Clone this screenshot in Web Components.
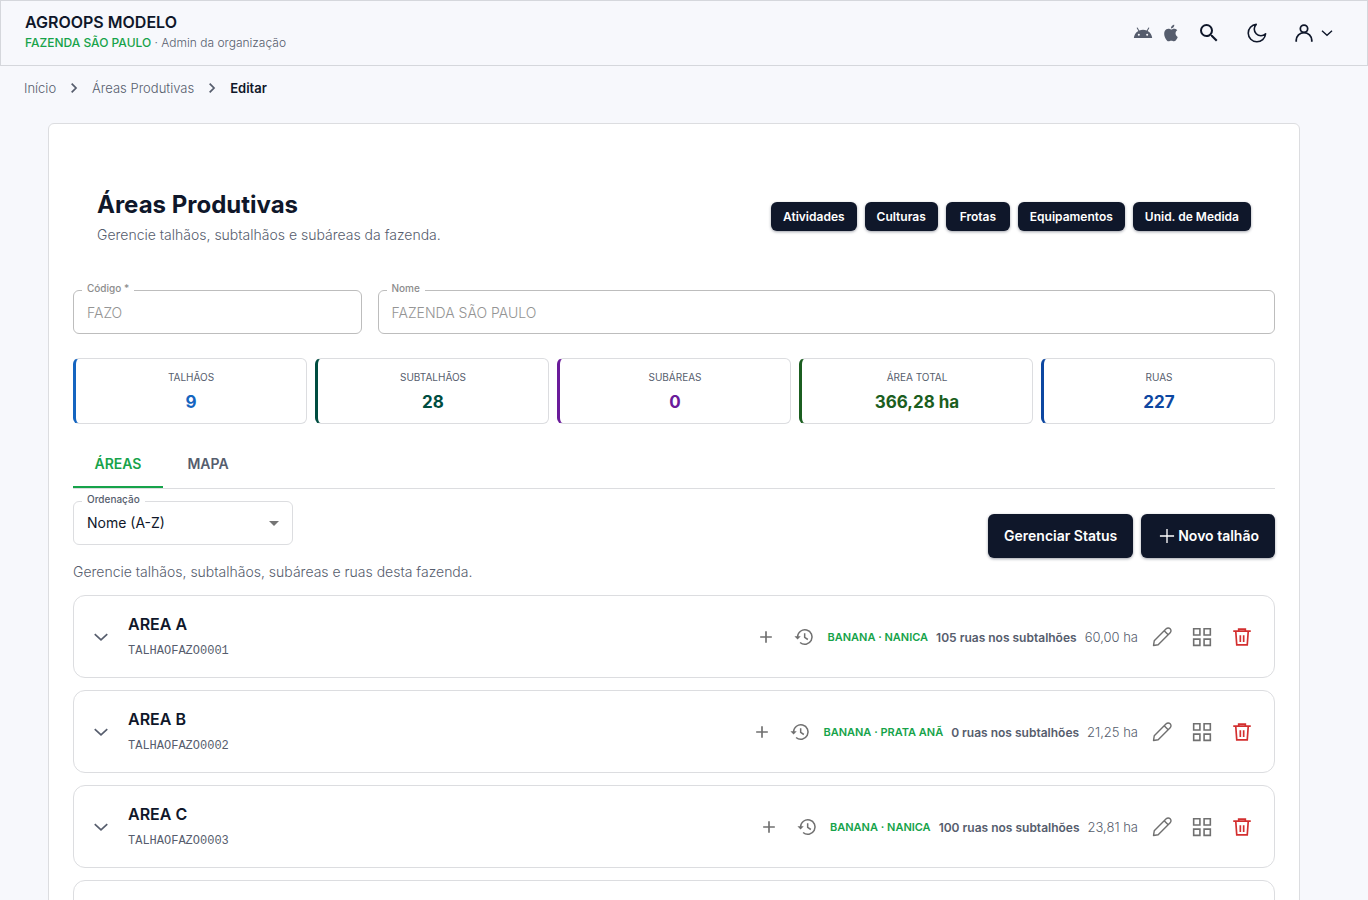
<!DOCTYPE html>
<html lang="pt-BR">
<head>
<meta charset="utf-8">
<meta name="viewport" content="width=device-width, initial-scale=1">
<title>AgroOps - Áreas Produtivas</title>
<style>
    :root {
        --ink: #0f172a;
        --muted: #565d6d;
        --green: #16a34a;
        --line: #dcdde0;
        --icon: #707070;
    }
    body {
        margin: 0;
        background: #f7f8fc;
        color: var(--ink);
        font-family: Inter, sans-serif;
        font-size: 14px;
    }
</style>
</head>
<body>
<agro-app>
    <agro-header slot="header" org="AGROOPS MODELO" farm="FAZENDA SÃO PAULO" role-name="Admin da organização"></agro-header>
    <agro-breadcrumb slot="breadcrumb">
        <a href="#inicio">Início</a>
        <a href="#areas">Áreas Produtivas</a>
        <span aria-current="page">Editar</span>
    </agro-breadcrumb>

    <agro-page-title heading="Áreas Produtivas" text="Gerencie talhãos, subtalhãos e subáreas da fazenda.">
        <agro-button size="small">Atividades</agro-button>
        <agro-button size="small">Culturas</agro-button>
        <agro-button size="small">Frotas</agro-button>
        <agro-button size="small">Equipamentos</agro-button>
        <agro-button size="small">Unid. de Medida</agro-button>
    </agro-page-title>

    <agro-form-grid>
        <agro-field label="Código *" value="FAZO"></agro-field>
        <agro-field label="Nome" value="FAZENDA SÃO PAULO"></agro-field>
    </agro-form-grid>

    <agro-stats>
        <agro-stat label="TALHÃOS" value="9" color="#1565c0"></agro-stat>
        <agro-stat label="SUBTALHÃOS" value="28" color="#004d40"></agro-stat>
        <agro-stat label="SUBÁREAS" value="0" color="#6a1b9a"></agro-stat>
        <agro-stat label="ÁREA TOTAL" value="366,28 ha" color="#1b5e20"></agro-stat>
        <agro-stat label="RUAS" value="227" color="#0d47a1"></agro-stat>
    </agro-stats>

    <agro-tabs tabs="ÁREAS,MAPA"></agro-tabs>

    <agro-toolbar>
        <agro-select slot="start" label="Ordenação" options="Nome (A-Z),Nome (Z-A)"></agro-select>
        <agro-button>Gerenciar Status</agro-button>
        <agro-button icon="plusThin">Novo talhão</agro-button>
        <span slot="text">Gerencie talhãos, subtalhãos, subáreas e ruas desta fazenda.</span>
    </agro-toolbar>

    <agro-area name="AREA A" code="TALHAOFAZO0001" crop="BANANA · NANICA" streets="105" size="60,00 ha"></agro-area>
    <agro-area name="AREA B" code="TALHAOFAZO0002" crop="BANANA · PRATA ANÃ" streets="0" size="21,25 ha"></agro-area>
    <agro-area name="AREA C" code="TALHAOFAZO0003" crop="BANANA · NANICA" streets="100" size="23,81 ha"></agro-area>
    <agro-area name="AREA D" code="TALHAOFAZO0004" streets="0"></agro-area>
</agro-app>

<script>
const ICONS = {
    android: '<path fill="currentColor" d="M17.6 9.48l1.84-3.18c.16-.31.04-.69-.26-.85a.64.64 0 0 0-.83.22l-1.88 3.24a11.5 11.5 0 0 0-8.94 0L5.65 5.67a.64.64 0 0 0-.87-.2c-.28.18-.37.54-.22.83L6.4 9.48A10.8 10.8 0 0 0 1 18h22a10.8 10.8 0 0 0-5.4-8.52zM7 15.25a1.25 1.25 0 1 1 0-2.5 1.25 1.25 0 0 1 0 2.5zm10 0a1.25 1.25 0 1 1 0-2.5 1.25 1.25 0 0 1 0 2.5z"/>',
    apple: '<path fill="currentColor" d="M18.71 19.5c-.83 1.24-1.71 2.45-3.05 2.47-1.34.03-1.77-.79-3.29-.79-1.53 0-2 .77-3.27.82-1.31.05-2.3-1.32-3.14-2.53C4.25 17 2.94 12.45 4.7 9.39c.87-1.52 2.43-2.48 4.12-2.51 1.28-.02 2.5.87 3.29.87.78 0 2.26-1.07 3.81-.91.65.03 2.47.26 3.64 1.98-.09.06-2.17 1.28-2.15 3.81.03 3.02 2.65 4.03 2.68 4.04-.03.07-.42 1.44-1.38 2.83M13 3.5c.73-.83 1.94-1.46 2.94-1.5.13 1.17-.34 2.35-1.04 3.19-.69.85-1.83 1.51-2.95 1.42-.15-1.15.41-2.35 1.05-3.11z"/>',
    search: '<path fill="currentColor" d="M15.5 14h-.79l-.28-.27A6.47 6.47 0 0 0 16 9.5 6.5 6.5 0 1 0 9.5 16c1.61 0 3.09-.59 4.23-1.57l.27.28v.79l5 4.99L20.49 19l-4.99-5zm-6 0C7.01 14 5 11.99 5 9.5S7.01 5 9.5 5 14 7.01 14 9.5 11.99 14 9.5 14z"/>',
    moon: '<path fill="none" stroke="currentColor" stroke-width="1.6" stroke-linejoin="round" d="M11.2 3.4A8.7 8.7 0 1 0 20.6 12.8A6.2 6.2 0 0 1 11.2 3.4z"/>',
    person: '<g fill="none" stroke="currentColor" stroke-width="1.9"><circle cx="12" cy="7.4" r="4"/><path d="M3.5 21.500v-1.500a8.500 8.500 0 0 1 17 0v1.500"/></g>',
    chevronDown: '<path fill="none" stroke="currentColor" stroke-width="2" d="M4.5 8.5l7.5 7 7.5-7"/>',
    chevronRight: '<path fill="none" stroke="currentColor" stroke-width="2.6" d="M8.5 5.5L15 12l-6.5 6.5"/>',
    plus: '<path fill="none" stroke="currentColor" stroke-width="2" d="M12 5v14M5 12h14"/>',
    plusThin: '<path fill="none" stroke="currentColor" stroke-width="1.6" d="M12 3.5v17M3.5 12h17"/>',
    history: '<g fill="none" stroke="currentColor" stroke-width="1.8"><path d="M4.3 12.5v-.7a8.700 8.700 0 1 1 3 6.800"/><path d="M12.800 7.500v5l3.800 2.500"/></g><path fill="currentColor" d="M.500 11h7.600l-3.800 4z"/>',
    pencil: '<g fill="none" stroke="currentColor" stroke-width="1.700" stroke-linejoin="round"><path d="M1.800 22.200l.9-5.600L17 2.200a3.200 3.200 0 0 1 4.800 4.800L7.400 21.300z"/><path d="M14.600 4.600l4.800 4.800"/></g>',
    grid: '<g fill="none" stroke="currentColor" stroke-width="1.9"><path d="M2 2h7.5v7.5H2zM14.5 2H22v7.5h-7.5zM2 14.5h7.5V22H2zM14.5 14.5H22V22h-7.5z"/></g>',
    trash: '<g fill="none" stroke="currentColor" stroke-width="2"><path d="M1.5 5h21M8 5V2.500h8V5M4.500 5l1.200 16.500h12.600L19.500 5"/><path d="M10 10v8M14 10v8"/></g>'
};

const icon = (name, size) =>
    `<svg width="${size}" height="${size}" viewBox="0 0 24 24" aria-hidden="true">${ICONS[name]}</svg>`;

// Base class: opens the shadow root and renders once
class AgroElement extends HTMLElement {
    connectedCallback() {
        if (this.shadowRoot) return;
        this.attachShadow({ mode: 'open' });
        this.shadowRoot.innerHTML = this.template();
    }

    attr(name) {
        return this.getAttribute(name) || '';
    }
}

class AgroApp extends AgroElement {
    template() {
        return `
            <style>
                :host {
                    display: flex;
                    flex-direction: column;
                    height: 100vh;
                }
                .scroll {
                    flex: 1;
                    min-height: 0;
                    overflow: auto;
                    scrollbar-width: none;
                }
                main {
                    display: flex;
                    flex-direction: column;
                    gap: 12px;
                    margin: 13px 68px 24px 48px;
                    padding: 24px;
                    background: #fff;
                    border: 1px solid var(--line);
                    border-radius: 6px;
                }
            </style>
            <slot name="header"></slot>
            <div class="scroll">
                <slot name="breadcrumb"></slot>
                <main><slot></slot></main>
            </div>
        `;
    }
}

class AgroHeader extends AgroElement {
    template() {
        return `
            <style>
                :host { display: block; }
                header {
                    display: flex;
                    justify-content: space-between;
                    box-sizing: border-box;
                    height: 66px;
                    padding: 10px 32px 0 24px;
                    border: 1px solid #d5d7dc;
                }
                .org {
                    font-size: 16px;
                    line-height: 22px;
                    font-weight: 600;
                }
                .sub {
                    font-size: 12px;
                    line-height: 20px;
                    font-weight: 300;
                    color: var(--muted);
                }
                .sub b { color: var(--green); font-weight: 500; }
                nav {
                    display: flex;
                    align-items: center;
                    height: 44px;
                }
                .stores { display: flex; gap: 8px; color: var(--muted); margin-right: 4px; }
                a { display: flex; color: inherit; }
                button {
                    display: flex;
                    align-items: center;
                    gap: 4px;
                    padding: 12px;
                    border: 0;
                    background: none;
                    color: var(--ink);
                    cursor: pointer;
                }
                .user { padding: 4px 0 4px 12px; }
            </style>
            <header>
                <div>
                    <div class="org">${this.attr('org')}</div>
                    <div class="sub"><b>${this.attr('farm')}</b> · ${this.attr('role-name')}</div>
                </div>
                <nav>
                    <div class="stores">
                        <a href="#android" aria-label="Android">${icon('android', 20)}</a>
                        <a href="#ios" aria-label="iOS">${icon('apple', 20)}</a>
                    </div>
                    <button aria-label="Buscar">${icon('search', 24)}</button>
                    <button aria-label="Tema escuro">${icon('moon', 24)}</button>
                    <button class="user" aria-label="Conta">${icon('person', 22)}${icon('chevronDown', 16)}</button>
                </nav>
            </header>
        `;
    }
}

class AgroBreadcrumb extends AgroElement {
    template() {
        const items = [...this.children];
        items.forEach((el, i) => { el.slot = `item-${i}`; });
        const list = items.map((el, i) => `<slot name="item-${i}"></slot>`);
        return `
            <style>
                :host {
                    display: flex;
                    align-items: center;
                    gap: 10px;
                    height: 44px;
                    padding: 0 24px;
                    font-size: 13px;
                    line-height: 20px;
                    font-weight: 300;
                    color: var(--muted);
                }
                ::slotted(a) { color: inherit; text-decoration: none; }
                ::slotted([aria-current]) { color: var(--ink); font-weight: 600; }
            </style>
            ${list.join(icon('chevronRight', 16))}
        `;
    }
}

class AgroPageTitle extends AgroElement {
    template() {
        return `
            <style>
                :host {
                    display: flex;
                    justify-content: space-between;
                    align-items: center;
                    padding: 40px 24px 33px;
                }
                h1 { margin: 0; font-size: 24px; line-height: 34px; font-weight: 700; }
                p {
                    margin: 0;
                    padding-top: 3px;
                    font-size: 14px;
                    line-height: 20px;
                    font-weight: 300;
                    color: var(--muted);
                }
                .actions { display: flex; gap: 8px; }
            </style>
            <div>
                <h1>${this.attr('heading')}</h1>
                <p>${this.attr('text')}</p>
            </div>
            <div class="actions"><slot></slot></div>
        `;
    }
}

class AgroButton extends AgroElement {
    template() {
        const name = this.attr('icon');
        return `
            <style>
                :host { display: block; }
                button {
                    display: flex;
                    align-items: center;
                    justify-content: center;
                    gap: 1px;
                    min-width: 64px;
                    height: 44px;
                    padding: 0 16px;
                    border: 0;
                    border-radius: 6px;
                    background: var(--ink);
                    box-shadow: 0 1px 3px rgba(15, 23, 42, 0.4);
                    color: #fff;
                    font: 600 14px/20px Inter, sans-serif;
                    cursor: pointer;
                }
                :host([size="small"]) button {
                    height: 29px;
                    padding: 0 12px;
                    font-size: 12px;
                }
            </style>
            <button>${name ? icon(name, 20) : ''}<slot></slot></button>
        `;
    }
}

class AgroFormGrid extends AgroElement {
    template() {
        return `
            <style>
                :host {
                    display: grid;
                    grid-template-columns: repeat(12, 1fr);
                    gap: 16px;
                    padding-bottom: 12px;
                }
                ::slotted(:first-child) { grid-column: span 3; }
                ::slotted(:last-child) { grid-column: span 9; }
            </style>
            <slot></slot>
        `;
    }
}

// Outlined box styles shared by the text field and the select
const outlinedStyles = `
    :host { display: block; position: relative; }
    label {
        position: absolute;
        top: -9px;
        left: 9px;
        padding: 0 5px;
        background: #fff;
        font-size: 10px;
        line-height: 14px;
        font-weight: 500;
    }
    input, select {
        box-sizing: border-box;
        display: block;
        width: 100%;
        height: 44px;
        margin: 0;
        padding: 0 13px;
        border: 1px solid var(--line);
        border-radius: 6px;
        background: #fff;
        color: var(--ink);
        font: 400 14px/20px Inter, sans-serif;
    }
`;

class AgroField extends AgroElement {
    template() {
        return `
            <style>
                ${outlinedStyles}
                label { color: #8c8c8c; }
                input { border-color: #bdbdbd; color: #949494; font-weight: 300; }
            </style>
            <input id="field" type="text" value="${this.attr('value')}" disabled>
            <label for="field">${this.attr('label')}</label>
        `;
    }
}

class AgroSelect extends AgroElement {
    template() {
        const options = this.attr('options').split(',');
        return `
            <style>
                ${outlinedStyles}
                :host { width: 220px; }
                label { color: var(--muted); }
                select { appearance: none; }
                .arrow {
                    position: absolute;
                    top: 20px;
                    right: 14px;
                    border: 5px solid transparent;
                    border-top-color: #757575;
                    border-bottom: 0;
                    pointer-events: none;
                }
            </style>
            <select id="select">${options.map(o => `<option>${o}</option>`).join('')}</select>
            <label for="select">${this.attr('label')}</label>
            <span class="arrow"></span>
        `;
    }
}

class AgroStats extends AgroElement {
    template() {
        return `
            <style>
                :host {
                    display: grid;
                    grid-template-columns: repeat(5, 1fr);
                    gap: 8px;
                    padding-bottom: 4px;
                }
            </style>
            <slot></slot>
        `;
    }
}

class AgroStat extends AgroElement {
    template() {
        const color = this.attr('color');
        return `
            <style>
                :host {
                    display: flex;
                    flex-direction: column;
                    align-items: center;
                    padding: 10px 8px 4px;
                    border: 1px solid var(--line);
                    border-left: 3px solid ${color};
                    border-radius: 6px;
                }
                .label { font-size: 10px; line-height: 16px; color: var(--muted); }
                .value { font-size: 17px; line-height: 34px; font-weight: 700; color: ${color}; }
            </style>
            <span class="label">${this.attr('label')}</span>
            <span class="value">${this.attr('value')}</span>
        `;
    }
}

class AgroTabs extends AgroElement {
    template() {
        const tabs = this.attr('tabs').split(',');
        return `
            <style>
                :host { display: block; }
                div { display: flex; border-bottom: 1px solid var(--line); }
                button {
                    min-width: 90px;
                    height: 48px;
                    padding: 2px 16px 0;
                    border: 0;
                    border-bottom: 2px solid transparent;
                    background: none;
                    color: var(--muted);
                    font: 600 14px/20px Inter, sans-serif;
                    cursor: pointer;
                }
                button[aria-selected="true"] {
                    color: var(--green);
                    border-bottom-color: var(--green);
                }
            </style>
            <div role="tablist">
                ${tabs.map((t, i) => `<button role="tab" aria-selected="${i === 0}">${t}</button>`).join('')}
            </div>
        `;
    }
}

class AgroToolbar extends AgroElement {
    template() {
        return `
            <style>
                :host { display: block; }
                .row {
                    display: flex;
                    justify-content: space-between;
                    align-items: flex-start;
                }
                .actions { display: flex; gap: 8px; padding-top: 13px; }
                .text {
                    margin: 4px 0 1px;
                    line-height: 20px;
                    font-weight: 300;
                    color: var(--muted);
                }
            </style>
            <div class="row">
                <slot name="start"></slot>
                <div class="actions"><slot></slot></div>
            </div>
            <p class="text"><slot name="text"></slot></p>
        `;
    }
}

class AgroArea extends AgroElement {
    template() {
        return `
            <style>
                :host {
                    display: flex;
                    align-items: center;
                    justify-content: space-between;
                    padding: 15px 16px 14px;
                    border: 1px solid var(--line);
                    border-radius: 12px;
                }
                .side { display: flex; align-items: center; gap: 8px; }
                .name { font-size: 16px; line-height: 26px; font-weight: 600; }
                .code {
                    margin-top: 2px;
                    font-family: "Liberation Mono", monospace;
                    font-size: 12px;
                    line-height: 24px;
                    color: var(--muted);
                }
                .crop { font-size: 11px; font-weight: 600; color: var(--green); }
                .streets { font-size: 12px; font-weight: 600; color: var(--muted); }
                .size { font-size: 13px; font-weight: 300; color: var(--muted); }
                button {
                    display: flex;
                    padding: 6px;
                    border: 0;
                    background: none;
                    color: var(--icon);
                    cursor: pointer;
                }
                button.tight { padding: 5px; }
                button.toggle { padding: 1px; margin-right: 8px; color: var(--muted); }
                button.delete { color: #d32f2f; }
            </style>
            <div class="side">
                <button class="toggle" aria-label="Expandir">${icon('chevronDown', 20)}</button>
                <div>
                    <div class="name">${this.attr('name')}</div>
                    <div class="code">${this.attr('code')}</div>
                </div>
            </div>
            <div class="side">
                <button class="tight" aria-label="Adicionar">${icon('plus', 20)}</button>
                <button class="tight" aria-label="Histórico">${icon('history', 20)}</button>
                <span class="crop">${this.attr('crop')}</span>
                <span class="streets">${this.attr('streets')} ruas nos subtalhões</span>
                <span class="size">${this.attr('size')}</span>
                <button aria-label="Editar">${icon('pencil', 20)}</button>
                <button aria-label="Subáreas">${icon('grid', 20)}</button>
                <button class="delete" aria-label="Excluir">${icon('trash', 20)}</button>
            </div>
        `;
    }
}

customElements.define('agro-header', AgroHeader);
customElements.define('agro-breadcrumb', AgroBreadcrumb);
customElements.define('agro-page-title', AgroPageTitle);
customElements.define('agro-button', AgroButton);
customElements.define('agro-form-grid', AgroFormGrid);
customElements.define('agro-field', AgroField);
customElements.define('agro-select', AgroSelect);
customElements.define('agro-stats', AgroStats);
customElements.define('agro-stat', AgroStat);
customElements.define('agro-tabs', AgroTabs);
customElements.define('agro-toolbar', AgroToolbar);
customElements.define('agro-area', AgroArea);
customElements.define('agro-app', AgroApp);
</script>
</body>
</html>
